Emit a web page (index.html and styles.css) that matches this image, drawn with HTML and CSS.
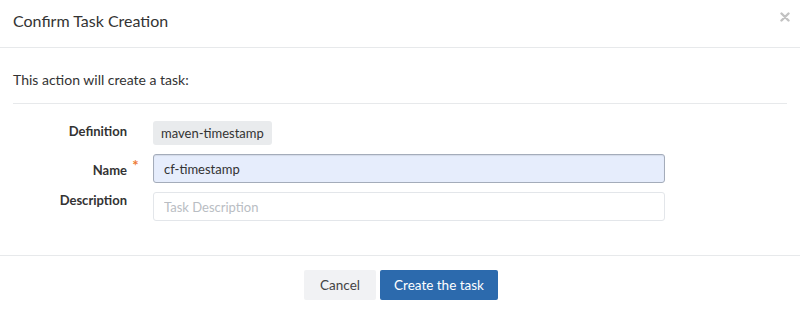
FILE: index.html
```html
<!DOCTYPE html>
<html lang="en">
<head>
    <meta charset="UTF-8">
    <meta name="viewport" content="width=device-width, initial-scale=1.0">
    <title>Confirm Task Creation</title>
    <link rel="stylesheet" href="styles.css">
</head>
<body>
    <div class="modal">
        <header class="modal-header">
            <h2 class="modal-title">Confirm Task Creation</h2>
            <button class="close" aria-label="Close">
                <svg width="10" height="10" viewBox="0 0 10 10">
                    <path d="M1.5 1.5 L8.5 8.5 M8.5 1.5 L1.5 8.5" stroke="#c2c2c2" stroke-width="2.4" stroke-linecap="round"/>
                </svg>
            </button>
        </header>

        <section class="modal-body">
            <p class="intro">This action will create a task:</p>

            <div class="form">
                <label class="form-label">Definition</label>
                <div class="form-value">
                    <span class="badge">maven-timestamp</span>
                </div>

                <label class="form-label form-label-center" for="name">Name<span class="req">*</span></label>
                <div class="form-value">
                    <input class="field field-active" type="text" id="name" value="cf-timestamp">
                </div>

                <label class="form-label form-label-up" for="description">Description</label>
                <div class="form-value">
                    <input class="field" type="text" id="description" placeholder="Task Description">
                </div>
            </div>
        </section>

        <footer class="modal-footer">
            <button class="btn btn-cancel">Cancel</button>
            <button class="btn btn-primary">Create the task</button>
        </footer>
    </div>
</body>
</html>
```

FILE: styles.css
```css
/* General styles */
body {
    margin: 0;
    padding: 0;
    font-family: Lato, "Open Sans", Arial, sans-serif;
    color: #333333;
    background: #FFFFFF;
}

.modal {
    width: 800px;
}

/* Header */
.modal-header {
    display: flex;
    align-items: flex-start;
    justify-content: space-between;
    height: 48px;
    padding: 11px 10px 0 13px;
    box-sizing: border-box;
    border-bottom: 1px solid #E7E9EB;
}

.modal-title {
    margin: 0;
    font-size: 16px;
    line-height: 20px;
    font-weight: normal;
    color: #333333;
}

.close {
    border: none;
    background: none;
    padding: 0;
    margin-top: 1px;
    width: 10px;
    height: 10px;
    cursor: pointer;
}

.close svg {
    display: block;
}

/* Body */
.modal-body {
    padding: 0 13px 34px;
}

.intro {
    margin: 0;
    padding: 22px 0 13px;
    font-size: 14px;
    line-height: 20px;
    border-bottom: 1px solid #E7E9EB;
}

.form {
    display: grid;
    grid-template-columns: 127px 512px;
    column-gap: 13px;
    row-gap: 9px;
    margin-top: 17px;
}

.form-label {
    align-self: start;
    padding-right: 13px;
    text-align: right;
    font-size: 13px;
    line-height: 20px;
    font-weight: bold;
    color: #333333;
}

.form-label-center {
    align-self: center;
    margin-top: 3px;
}

.form-label-up {
    margin-top: -2px;
}

.req {
    display: inline-block;
    width: 9px;
    margin-right: -13px;
    margin-left: 4px;
    text-align: center;
    color: #EE7B33;
    font-size: 15px;
    vertical-align: 4px;
    line-height: 10px;
}

.badge {
    display: inline-block;
    height: 24px;
    line-height: 24px;
    padding: 0 8px;
    border-radius: 3px;
    background-color: #E9EBED;
    font-size: 13px;
    color: #333333;
}

.field {
    display: block;
    width: 512px;
    height: 29px;
    box-sizing: border-box;
    padding: 0 10px;
    border: 1px solid #E3E6EA;
    border-radius: 3px;
    background: #FFFFFF;
    font-family: inherit;
    font-size: 13px;
    color: #333333;
    outline: none;
}

.field::placeholder {
    color: #B9BDC3;
}

.field-active {
    background-color: #E6EDFC;
    border-color: #A4ACBA;
    box-shadow: inset 0 1px 1px rgba(0, 0, 0, 0.08);
}

/* Footer */
.modal-footer {
    display: flex;
    justify-content: center;
    gap: 4px;
    padding: 14px 0 8px 2px;
    border-top: 1px solid #E7E9EB;
}

.btn {
    height: 30px;
    padding: 0;
    border: none;
    border-radius: 2px;
    font-family: inherit;
    font-size: 13.5px;
    cursor: pointer;
}

.btn-cancel {
    width: 72px;
    background-color: #F1F2F4;
    color: #444444;
}

.btn-primary {
    width: 118px;
    background-color: #2C6AAD;
    color: #FFFFFF;
}
```
